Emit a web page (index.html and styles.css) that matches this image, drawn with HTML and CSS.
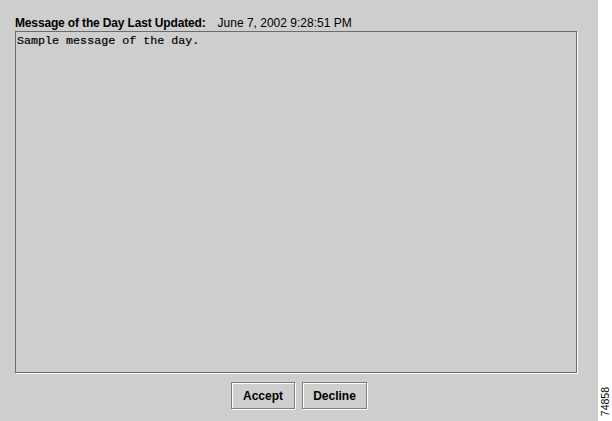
FILE: index.html
```html
<!DOCTYPE html>
<html lang="en">
<head>
  <meta charset="UTF-8">
  <meta name="viewport" content="width=device-width, initial-scale=1.0">
  <title>Message of the Day</title>
  <link rel="stylesheet" href="styles.css">
</head>
<body>

  <div class="panel">
    <div class="header">
      <span class="header-label">Message of the Day Last Updated:</span>
      <span class="header-date">June 7, 2002 9:28:51 PM</span>
    </div>

    <div class="message">Sample message of the day.</div>

    <div class="buttons">
      <button class="button">Accept</button>
      <button class="button">Decline</button>
    </div>
  </div>

  <div class="margin">
    <span class="figure-id">74858</span>
  </div>

</body>
</html>
```

FILE: styles.css
```css
* {
  margin: 0;
  padding: 0;

  box-sizing: border-box;
  font-family: 'Liberation Sans', Arial, sans-serif;
}

body {
  display: flex;
  width: 612px;
  height: 421px;

  background: #ffffff;
  overflow: hidden;
}

.panel {
  display: flex;
  flex-direction: column;

  width: 598px;
  height: 421px;
  padding: 15px 21px 0 15px;

  background: #cecece;
}

.header {
  display: flex;
  gap: 12px;

  height: 16px;
  font-size: 12px;
  line-height: 16px;
  color: #000000;
}

.header-label {
  font-weight: bold;
  letter-spacing: -0.15px;
}

.message {
  height: 342px;
  padding: 2px 1px;

  border: 1px solid #6b6b6b;
  box-shadow: 1px 1px 0 #ffffff;

  font-family: 'Liberation Mono', 'Courier New', monospace;
  font-size: 11.7px;
  line-height: 14px;
  color: #000000;
  -webkit-text-stroke: 0.2px #000000;
}

.buttons {
  display: flex;
  justify-content: center;
  gap: 7px;

  margin-top: 9px;
  padding-left: 6px;
}

.button {
  width: 64px;
  height: 27px;

  background: #cecece;
  border: 1px solid #7c7c7c;
  box-shadow: inset 1px 1px 0 #ffffff, 1px 1px 0 #ffffff;

  font-size: 12px;
  font-weight: bold;
  color: #000000;
}

.button + .button {
  width: 65px;
}

.margin {
  display: flex;
  flex: 1;
  align-items: flex-end;
  justify-content: center;

  padding-bottom: 5px;
}

.figure-id {
  writing-mode: vertical-rl;
  transform: rotate(180deg);

  font-size: 10.5px;
  color: #000000;
}
```
